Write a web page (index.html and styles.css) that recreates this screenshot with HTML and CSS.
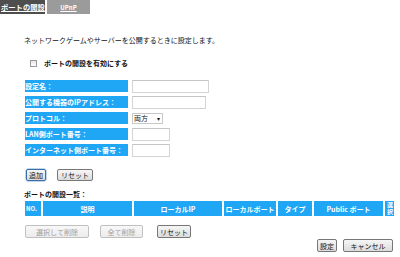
FILE: index.html
```html
<!DOCTYPE html>
<html lang="ja">
<head>
<meta charset="utf-8">
<link rel="stylesheet" href="styles.css">
</head>
<body>
<div class="tabs">
  <div class="tab tab-active"><span>ポートの開設</span></div>
  <div class="tab tab-other"><span>UPnP</span></div>
</div>
<div class="page">
  <p class="desc">ネットワークゲームやサーバーを公開するときに設定します。</p>
  <div class="enable">
    <span class="checkbox"></span>
    <span class="enable-label">ポートの開設を有効にする</span>
  </div>
  <div class="form">
    <div class="label">設定名：</div>
    <div class="field"><span class="input w77"></span></div>
    <div class="label">公開する機器のIPアドレス：</div>
    <div class="field"><span class="input w74"></span></div>
    <div class="label">プロトコル：</div>
    <div class="field"><span class="select">両方<span class="arrow">▾</span></span></div>
    <div class="label">LAN側ポート番号：</div>
    <div class="field"><span class="input w38"></span></div>
    <div class="label">インターネット側ポート番号：</div>
    <div class="field"><span class="input w38"></span></div>
  </div>
  <div class="actions">
    <button class="btn btn-focus">追加</button>
    <button class="btn">リセット</button>
  </div>
  <div class="list-title">ポートの開設一覧：</div>
  <div class="thead">
    <div class="th c-no">NO.</div>
    <div class="th c-desc">説明</div>
    <div class="th c-ip">ローカルIP</div>
    <div class="th c-lport">ローカルポート</div>
    <div class="th c-type">タイプ</div>
    <div class="th c-pport">Public ポート</div>
    <div class="th c-sel"><span class="vert">選択</span></div>
  </div>
  <div class="table-actions">
    <button class="btn btn-disabled">選択して削除</button>
    <button class="btn btn-disabled">全て削除</button>
    <button class="btn">リセット</button>
  </div>
  <div class="footer">
    <button class="btn">設定</button>
    <button class="btn btn-cancel">キャンセル</button>
  </div>
</div>
</body>
</html>
```
FILE: styles.css
```css
* { box-sizing: border-box; }
html, body { margin: 0; padding: 0; background: #fff; }
body {
  font-family: "Noto Sans CJK JP", "Noto Sans", sans-serif;
  font-size: 7px;
  color: #111;
  width: 400px;
  height: 257px;
  overflow: hidden;
}
.tabs { display: flex; height: 14px; }
.tab {
  display: flex; align-items: center;
  color: #fff; font-weight: bold; text-decoration: underline;
  height: 14px;
}
.tab-active { width: 45px; background: #4e4e4e; padding-left: 1px; font-size: 7.3px; }
.tab-other { width: 43px; margin-left: 2px; background: #9b9b9b; justify-content: center; font-size: 6px; }

.page { padding-left: 24px; }
.desc { margin: 21px 0 0; line-height: 10px; height: 10px; }
.enable { display: flex; align-items: center; margin-top: 14px; height: 8px; padding-left: 6px; }
.checkbox { width: 7px; height: 7px; border: 1px solid #9a9a9a; background: linear-gradient(#e6e6e6, #fff); }
.enable-label { margin-left: 7px; font-weight: bold; }

.form {
  display: grid;
  grid-template-columns: 103px auto;
  column-gap: 4px;
  row-gap: 4px;
  margin-top: 13px;
  padding-left: 1px;
}
.label {
  background: #1fa6f5;
  color: #fff;
  font-weight: bold;
  height: 12px;
  line-height: 12px;
  white-space: nowrap;
  overflow: hidden;
}
.field { display: flex; align-items: center; height: 12px; }
.input {
  display: block; height: 13px;
  border: 1px solid #d4d4d4; border-top-color: #c4c4c4;
  background: #fff;
}
.w77 { width: 77px; }
.w74 { width: 74px; }
.w38 { width: 38px; }
.select {
  display: flex; align-items: center; justify-content: space-between;
  width: 31px; height: 11px; border: 1px solid #c8c8c8;
  padding: 0 2px 0 1px; font-size: 7px; line-height: 9px; background: #fff;
}
.arrow { font-size: 6px; }

.actions { display: flex; gap: 11px; margin-top: 13px; padding-left: 2px; height: 12px; }
.btn {
  font-family: inherit; font-size: 7px; color: #111;
  height: 12px; padding: 0 3px; margin: 0;
  border: 1px solid #777; border-radius: 2px;
  background: linear-gradient(#f6f6f6, #dcdcdc);
  line-height: 10px;
  white-space: nowrap;
}
.btn-focus { border-color: #3a6ea5; box-shadow: 0 0 0 0.5px #7fb0e0; padding: 0 2px; }
.list-title { margin-top: 8px; font-weight: bold; line-height: 10px; height: 10px; }

.thead { display: flex; gap: 2px; margin-top: 2px; padding-left: 1px; height: 15px; }
.th {
  background: #1fa6f5; color: #fff; font-weight: bold;
  display: flex; align-items: center; justify-content: center;
  height: 15px; white-space: nowrap;
}
.c-no { width: 16px; justify-content: flex-start; padding-left: 1px; font-size: 6px; }
.c-desc { width: 89px; }
.c-ip { width: 88px; }
.c-lport { width: 52px; }
.c-type { width: 34px; }
.c-pport { width: 69px; }
.c-sel { width: 9px; font-size: 6px; overflow: hidden; }
.vert { writing-mode: vertical-rl; line-height: 8px; letter-spacing: 0.5px; }

.table-actions { display: flex; margin-top: 9px; padding-left: 1px; height: 13px; }
.table-actions .btn { height: 13px; padding: 0; }
.table-actions .btn:nth-child(1) { width: 64px; }
.table-actions .btn:nth-child(2) { width: 43px; margin-left: 11px; }
.table-actions .btn:nth-child(3) { width: 34px; margin-left: 14px; }
.btn-disabled { color: #a0a0a0; border-color: #c0c0c0; background: linear-gradient(#f8f8f8, #ececec); }

.footer { display: flex; justify-content: flex-end; gap: 6px; margin-top: 1px; padding-right: 7px; height: 13px; }
.footer .btn { height: 13px; padding: 0; }
.footer .btn:first-child { width: 20px; }
.btn-cancel { width: 50px; }
```
